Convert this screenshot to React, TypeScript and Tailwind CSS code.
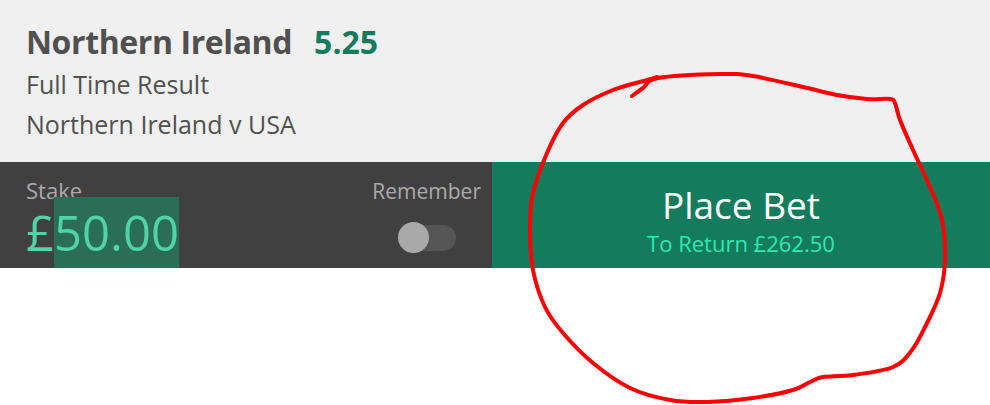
import React from 'react';

// hand-drawn annotation around the button
const circlePoints: [number, number][] = [
  [632, 96], [643, 88], [658, 78], [720, 74], [753, 76], [803, 87], [837, 95], [867, 99],
  [890, 99], [895, 103], [900, 120], [913, 150], [930, 187], [942, 220], [945, 260],
  [940, 293], [927, 323], [912, 350], [893, 367], [853, 375], [823, 377], [810, 382],
  [793, 390], [753, 398], [707, 402], [670, 400], [630, 388], [593, 363], [563, 333],
  [545, 307], [533, 270], [530, 227], [533, 193], [547, 153], [563, 123], [583, 105],
  [613, 90], [647, 80], [657, 77],
];

function smoothPath(pts: [number, number][]) {
  let d = `M ${pts[0][0]} ${pts[0][1]}`;
  for (let i = 0; i < pts.length - 1; i++) {
    const p0 = pts[i - 1] || pts[i];
    const p1 = pts[i];
    const p2 = pts[i + 1];
    const p3 = pts[i + 2] || p2;
    const c1x = p1[0] + (p2[0] - p0[0]) / 6;
    const c1y = p1[1] + (p2[1] - p0[1]) / 6;
    const c2x = p2[0] - (p3[0] - p1[0]) / 6;
    const c2y = p2[1] - (p3[1] - p1[1]) / 6;
    d += ` C ${c1x} ${c1y}, ${c2x} ${c2y}, ${p2[0]} ${p2[1]}`;
  }
  return d;
}

export default function App() {
  return (
    <div className="relative w-[990px] h-[405px] bg-white overflow-hidden font-['Open_Sans',sans-serif]">
      <div className="h-[162px] bg-[#f0f0f0] pl-[26px] pt-[22px] text-[#505050]">
        <div className="flex items-baseline leading-[40px]">
          <span className="text-[32px] font-bold tracking-[-0.4px]">Northern Ireland</span>
          <span className="ml-[22px] text-[32px] font-bold text-[#147b5c]">5.25</span>
        </div>
        <div className="text-[25px] leading-[40px] mt-[2px]">Full Time Result</div>
        <div className="text-[25px] leading-[40px]">Northern Ireland v USA</div>
      </div>

      <div className="flex h-[106px]">
        <div className="w-[492px] bg-[#404040] flex justify-between pl-[26px] pr-[11px]">
          <div className="flex flex-col pt-[17px]">
            <div className="text-[22px] leading-[22px] text-[#ababab]">Stake</div>
            <div className="mt-[-4px] text-[49px] leading-[71px] text-[#4fd3a7] whitespace-nowrap">
              £<span className="inline-block bg-[#2b6e58]">50.00</span>
            </div>
          </div>
          <div className="flex flex-col items-center pt-[18px]">
            <div className="text-[21px] leading-[22px] text-[#ababab]">Remember</div>
            <div className="relative mt-[20px] w-[58px] h-[31px] flex items-center">
              <div className="ml-[4px] w-[54px] h-[26px] rounded-full bg-[#555555]" />
              <div className="absolute left-0 top-0 w-[31px] h-[31px] rounded-full bg-[#a9a9a9]" />
            </div>
          </div>
        </div>
        <div className="flex-1 bg-[#147b5c] flex flex-col items-center pt-[20px]">
          <div className="text-[37px] leading-[46px] text-white">Place Bet</div>
          <div className="text-[22px] leading-[30px] text-[#2ee8b0]">To Return £262.50</div>
        </div>
      </div>

      <svg className="absolute inset-0 pointer-events-none" width="990" height="405" viewBox="0 0 990 405">
        <path d={smoothPath(circlePoints)} fill="none" stroke="#ff0000" strokeWidth="4" strokeLinecap="round" strokeLinejoin="round" />
      </svg>
    </div>
  );
}
